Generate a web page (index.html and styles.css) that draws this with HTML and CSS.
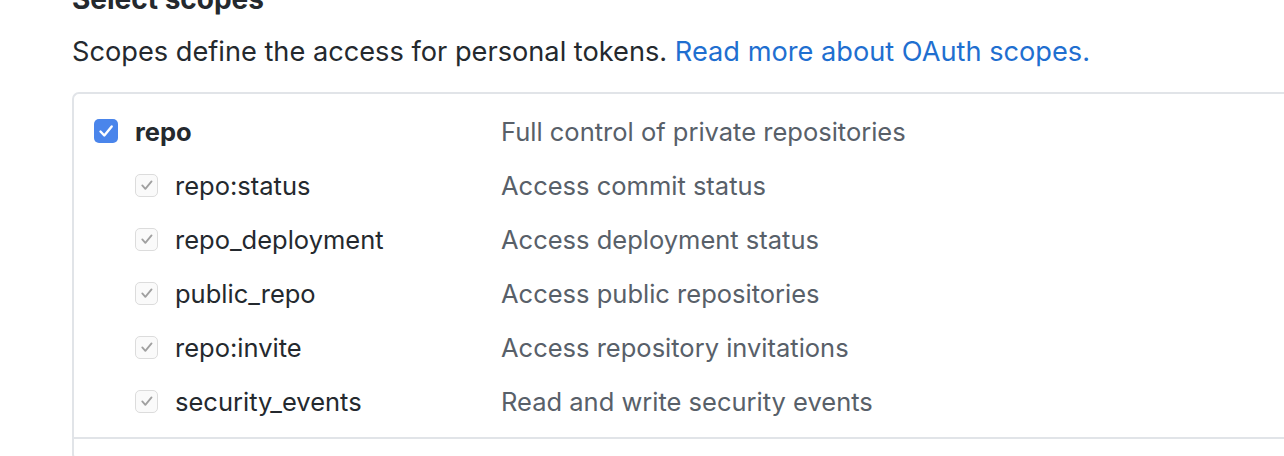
FILE: index.html
```html
<!DOCTYPE html>
<html>
<head>
<meta charset="utf-8">
<link rel="stylesheet" href="styles.css">
</head>
<body>
<div class="page">
  <h2 class="title">Select scopes</h2>
  <p class="lead">Scopes define the access for personal tokens. <a class="link" href="#">Read more about OAuth scopes.</a></p>
  <div class="box">
    <div class="group">
      <div class="row main">
        <span class="cb cb-on"><svg viewBox="0 0 24 24" width="24" height="24"><path d="M6.5 12.5l3.8 4 7.4-9" fill="none" stroke="#fff" stroke-width="2.4" stroke-linecap="round" stroke-linejoin="round"/></svg></span>
        <span class="name strong">repo</span>
        <span class="desc">Full control of private repositories</span>
      </div>
      <div class="row sub">
        <span class="cb cb-dis"><svg viewBox="0 0 22 22" width="22" height="22"><path d="M5.8 11.5l3.4 3.8 6.8-8.3" fill="none" stroke="#a0a0a0" stroke-width="2" stroke-linecap="round" stroke-linejoin="round"/></svg></span>
        <span class="name">repo:status</span>
        <span class="desc">Access commit status</span>
      </div>
      <div class="row sub">
        <span class="cb cb-dis"><svg viewBox="0 0 22 22" width="22" height="22"><path d="M5.8 11.5l3.4 3.8 6.8-8.3" fill="none" stroke="#a0a0a0" stroke-width="2" stroke-linecap="round" stroke-linejoin="round"/></svg></span>
        <span class="name">repo_deployment</span>
        <span class="desc">Access deployment status</span>
      </div>
      <div class="row sub">
        <span class="cb cb-dis"><svg viewBox="0 0 22 22" width="22" height="22"><path d="M5.8 11.5l3.4 3.8 6.8-8.3" fill="none" stroke="#a0a0a0" stroke-width="2" stroke-linecap="round" stroke-linejoin="round"/></svg></span>
        <span class="name">public_repo</span>
        <span class="desc">Access public repositories</span>
      </div>
      <div class="row sub">
        <span class="cb cb-dis"><svg viewBox="0 0 22 22" width="22" height="22"><path d="M5.8 11.5l3.4 3.8 6.8-8.3" fill="none" stroke="#a0a0a0" stroke-width="2" stroke-linecap="round" stroke-linejoin="round"/></svg></span>
        <span class="name">repo:invite</span>
        <span class="desc">Access repository invitations</span>
      </div>
      <div class="row sub">
        <span class="cb cb-dis"><svg viewBox="0 0 22 22" width="22" height="22"><path d="M5.8 11.5l3.4 3.8 6.8-8.3" fill="none" stroke="#a0a0a0" stroke-width="2" stroke-linecap="round" stroke-linejoin="round"/></svg></span>
        <span class="name">security_events</span>
        <span class="desc">Read and write security events</span>
      </div>
    </div>
    <div class="group next"></div>
  </div>
</div>
</body>
</html>
```
FILE: styles.css
```css
html, body {
  margin: 0;
  padding: 0;
  background: #fff;
  overflow: hidden;
}
body {
  font-family: Inter, "Liberation Sans", sans-serif;
  color: #24292e;
  width: 1284px;
  height: 456px;
}
.page {
  padding-left: 72px;
  width: 1400px;
}
.title {
  margin: -16px 0 0 0;
  font-size: 28px;
  line-height: 30px;
  font-weight: 700;
}
.lead {
  margin: 20px 0 0 0;
  font-size: 27.2px;
  line-height: 36px;
  color: #24292e;
}
.link {
  color: #1f6fd0;
  text-decoration: none;
}
.box {
  margin-top: 22px;
  border: 2px solid #e1e4e8;
  border-radius: 7px;
  border-right: none;
}
.group {
  padding: 10px 0 9px 20px;
}
.group.next {
  border-top: 2px solid #e1e4e8;
  height: 20px;
  padding: 0;
}
.row {
  display: flex;
  align-items: center;
  height: 54px;
  font-size: 25.5px;
}
.row.sub {
  padding-left: 41px;
}
.row.sub .name {
  width: 326px;
}
.row.main .name {
  width: 366px;
}
.strong {
  font-weight: 700;
}
.desc {
  color: #586069;
}
.cb {
  display: inline-flex;
  flex: none;
  box-sizing: border-box;
}
.cb-on {
  width: 24px;
  height: 24px;
  border-radius: 5px;
  background: #4a85eb;
  margin-right: 17px;
}
.cb-dis {
  width: 23px;
  height: 23px;
  border-radius: 5px;
  border: 1.5px solid #dcdcdc;
  background: #fafafa;
  margin-right: 17px;
  align-items: center;
  justify-content: center;
}
.cb-dis svg {
  width: 20px;
  height: 20px;
}
```
